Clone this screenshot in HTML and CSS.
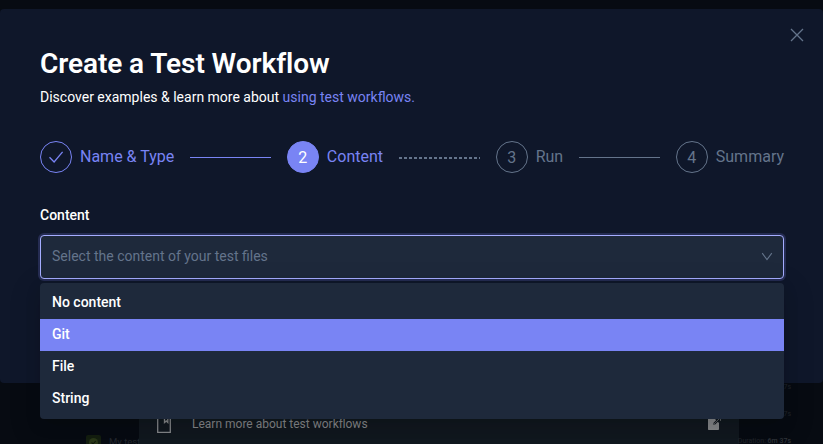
FILE: index.html
```
<!DOCTYPE html>
<html lang="en">
<head>
<meta charset="utf-8">
<title>Create a Test Workflow</title>
<link rel="stylesheet" href="styles.css">
</head>
<body>
<div class="page" aria-hidden="true">
  <div class="list-left">
    <div class="row"><span class="status status-failed"></span><span class="row-name"></span></div>
    <div class="row"><span class="status status-passed"><svg width="9" height="9" viewBox="0 0 9 9"><circle cx="4.5" cy="4.5" r="4.5" fill="#2a3818"/><path d="M2.5 4.5l1.5 1.5 2.7-3" fill="none" stroke="#10190d" stroke-width="1.1"/></svg></span><span class="row-name">My test</span></div>
  </div>
  <div class="learn">
    <svg class="learn-book" width="14" height="18" viewBox="0 0 14 18" fill="none" stroke="#85878a" stroke-width="1.3"><path d="M.7.7h12.6v15.6H.7zM7.5 1v5.500l1.800-1.500 1.500 1.500V1"/></svg>
    <span class="learn-text">Learn more about test workflows</span>
    <svg class="learn-open" width="15" height="15" viewBox="0 0 15 15"><path d="M1 3h7l4 4v6.500l-.8.5H1.500L1 13.500z" fill="#85878a"/><path d="M7 8L14 1" stroke="#11181f" stroke-width="2.400"/><path d="M6 9l7.500-7.500M10 1.500h3.500V5" fill="none" stroke="#55595d" stroke-width="1"/></svg>
  </div>
  <div class="durations">
    <div class="duration">6m 37s</div>
    <div class="duration">6m 37s</div>
    <div class="duration">Duration: <b>6m 37s</b></div>
  </div>
</div>
<main class="modal">
  <svg class="close" width="14" height="14" viewBox="0 0 14 14" fill="none" stroke="#64748b" stroke-width="1.300"><path d="M1 1l12 12M13 1L1 13"/></svg>
  <h1 class="title">Create a Test Workflow</h1>
  <p class="subtitle">Discover examples &amp; learn more about <a class="link">using test workflows.</a></p>
  <div class="steps">
    <div class="step done"><span class="circle"><svg width="16" height="16" viewBox="0 0 16 16" fill="none" stroke="currentColor" stroke-width="1.300"><path d="M1.500 7.200l4.600 4.800L14.600 1.800"/></svg></span><span class="name">Name &amp; Type</span></div>
    <span class="line line-done"></span>
    <div class="step active"><span class="circle">2</span><span class="name">Content</span></div>
    <span class="line line-dotted"></span>
    <div class="step"><span class="circle">3</span><span class="name">Run</span></div>
    <span class="line"></span>
    <div class="step"><span class="circle">4</span><span class="name">Summary</span></div>
  </div>
  <div class="label">Content</div>
  <div class="select">
    <span>Select the content of your test files</span>
    <svg width="12" height="12" viewBox="0 0 12 12" fill="none" stroke="#64748b" stroke-width="1.100"><path d="M1.200 3.200L6 9.500l4.800-6.300"/></svg>
    <div class="menu">
      <div class="option">No content</div>
      <div class="option selected">Git</div>
      <div class="option">File</div>
      <div class="option">String</div>
    </div>
  </div>
</main>
</body>
</html>
```
FILE: styles.css
```
* { box-sizing: border-box; }
body {
  margin: 0;
  height: 444px;
  overflow: hidden;
  position: relative;
  padding-top: 9px;
  background: #070b12;
  color: #fff;
  font: 400 14px/22px Roboto, sans-serif;
}
.page { position: absolute; inset: 383px 0 0; display: flex; overflow: hidden; }
.list-left { width: 139px; padding-left: 86px; flex: none; overflow: hidden; }
.row { display: flex; align-items: center; height: 31px; padding-top: 10px; gap: 8px; border-bottom: 1px solid #0b1018; white-space: nowrap; font-size: 9.5px; line-height: 12px; color: #23272e; }
.row:last-child { height: 54px; padding-top: 3px; }
.status { width: 15px; height: 15px; border-radius: 2px; flex: none; display: flex; align-items: center; justify-content: center; }
.status-failed { background: #2a0b1a; }
.status-passed { background: #141f10; }
.learn { width: 600px; flex: none; background: #11181f; display: flex; align-items: flex-start; padding: 30px 17px 0 18px; }
.learn-book { margin-top: 3px; }
.learn-text { flex: 1; margin-left: 21px; font-size: 12px; color: #85878a; }
.learn-open { margin-top: 3px; }
.durations { width: 52px; flex: none; display: flex; flex-direction: column; align-items: flex-end; font-size: 7px; color: #20242a; line-height: 8px; white-space: nowrap; }
.duration { height: 27px; flex: none; }
.duration b { font-weight: 500; color: #30343a; }
.modal { position: relative; height: 374px; padding: 37px 39px 0 40px; background: #0f172a; border-radius: 4px; }
.close { position: absolute; right: 19px; top: 19px; }
.title { margin: 0; font-size: 28px; line-height: 36px; font-weight: 600; letter-spacing: -.08px; }
.subtitle { margin: 4px 0 0; }
.link { color: #7984f4; }
.steps { margin-top: 33px; display: flex; align-items: center; gap: 16px; height: 32px; }
.step { display: flex; align-items: center; gap: 8px; font-size: 16px; color: #64748b; }
.name { line-height: 32px; }
.circle { width: 32px; height: 32px; padding-top: 1px; border-radius: 50%; border: 1px solid currentColor; display: flex; align-items: center; justify-content: center; line-height: 32px; }
.done, .active { color: #7984f4; }
.active .circle { color: #fff; background: #7984f4; border-color: #7984f4; }
.line { flex: 1; height: 1px; background: #64748b; }
.line-done { background: #7984f4; }
.line-dotted { height: 2px; background: repeating-linear-gradient(90deg, #64748b 0 3px, transparent 3px 5px); transform: translateY(1px); }
.label { margin-top: 31px; font-weight: 500; }
.select { position: relative; margin-top: 9px; height: 44px; padding: 0 10px 2px 11px; display: flex; align-items: center; justify-content: space-between; color: #64748b; background: #1e293b; border: 1px solid #a5adff; border-radius: 4px; box-shadow: 0 0 0 2px #252c52; }
.menu { position: absolute; left: -1px; right: -1px; top: 47px; padding: 4px 0; background: #1e293b; border-radius: 4px; color: #fff; font-weight: 500; box-shadow: 0 6px 16px rgba(0,0,0,.12), 0 9px 28px 8px rgba(0,0,0,.08); }
.option { height: 32px; padding: 0 12px; line-height: 30px; }
.selected { background: #7984f4; }
```
